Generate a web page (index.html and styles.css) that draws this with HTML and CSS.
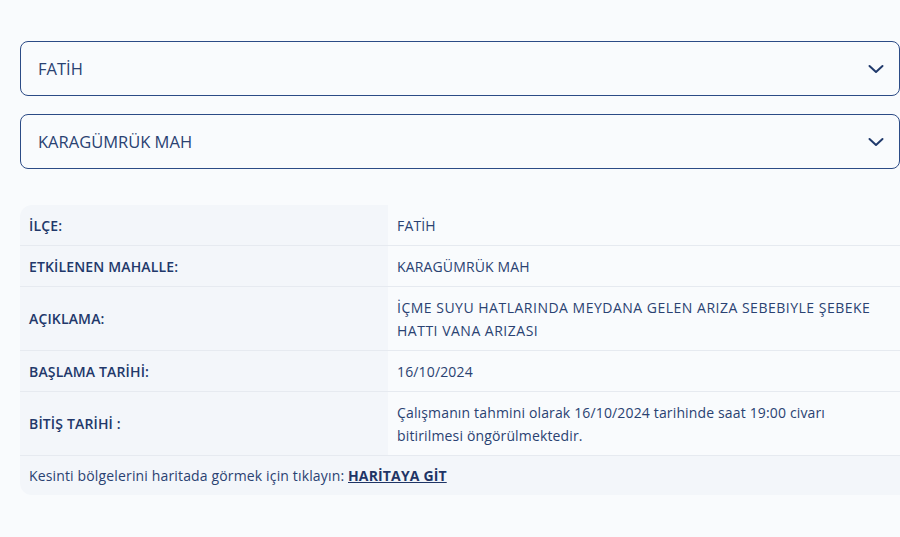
FILE: index.html
```html
<!DOCTYPE html>
<html lang="tr">

<head>
    <meta charset="UTF-8">
    <title>Arıza Kesinti Bilgisi</title>
    <link rel="stylesheet" href="styles.css">
</head>

<body>

    <div class="page">
        <div class="select">
            <span>FATİH</span>
            <svg class="chevron" viewBox="0 0 16 10" width="16" height="10">
                <path d="M1.5 2 L8 8 L14.5 2" />
            </svg>
        </div>

        <div class="select">
            <span>KARAGÜMRÜK MAH</span>
            <svg class="chevron" viewBox="0 0 16 10" width="16" height="10">
                <path d="M1.5 2 L8 8 L14.5 2" />
            </svg>
        </div>

        <div class="info">
            <div class="row">
                <div class="label">İLÇE:</div>
                <div class="value">FATİH</div>
            </div>
            <div class="row">
                <div class="label">ETKİLENEN MAHALLE:</div>
                <div class="value">KARAGÜMRÜK MAH</div>
            </div>
            <div class="row">
                <div class="label">AÇIKLAMA:</div>
                <div class="value caps">İÇME SUYU HATLARINDA MEYDANA GELEN ARIZA SEBEBIYLE ŞEBEKE HATTI VANA ARIZASI</div>
            </div>
            <div class="row">
                <div class="label">BAŞLAMA TARİHİ:</div>
                <div class="value">16/10/2024</div>
            </div>
            <div class="row">
                <div class="label">BİTİŞ TARİHİ :</div>
                <div class="value">Çalışmanın tahmini olarak 16/10/2024 tarihinde saat 19:00 civarı bitirilmesi öngörülmektedir.</div>
            </div>
            <div class="map-link">
                Kesinti bölgelerini haritada görmek için tıklayın: <a href="#">HARİTAYA GİT</a>
            </div>
        </div>
    </div>

</body>

</html>
```

FILE: styles.css
```css
* {
    box-sizing: border-box;
    font-family: 'Open Sans', 'Noto Sans', sans-serif;
}

body {
    margin: 0;
    background: #f9fbfd;
    color: #22386a;
    overflow: hidden;
}

.page {
    width: 880px;
    margin-left: 20px;
    padding-top: 41px;
}

.select {
    height: 55px;
    border: 1px solid #2c4b86;
    border-radius: 8px;
    display: flex;
    align-items: center;
    justify-content: space-between;
    padding: 0 15px 0 17px;
    margin-bottom: 18px;
    font-size: 16.5px;
    color: #2a4272;
}

.chevron path {
    fill: none;
    stroke: #203a6c;
    stroke-width: 2;
    stroke-linecap: round;
    stroke-linejoin: round;
}

.info {
    margin-top: 36px;
    border-radius: 12px 0 0 12px;
    overflow: hidden;
    background: #f3f6fa;
    font-size: 14px;
    letter-spacing: 0.15px;
}

.row {
    display: flex;
    border-bottom: 1px solid #e6eaf0;
}

.label {
    width: 368px;
    padding: 8.5px 9px;
    line-height: 23px;
    display: flex;
    align-items: center;
    font-weight: 600;
    color: #22386a;
}

.value {
    flex: 1;
    padding: 8.5px 9px;
    line-height: 23px;
    background: #f9fbfd;
    color: #2a4272;
}

.value.caps {
    letter-spacing: 0.5px;
}

.map-link {
    padding: 8.5px 9px;
    line-height: 22px;
    color: #2a4272;
}

.map-link a {
    color: #1f3566;
    font-weight: 700;
}
```
